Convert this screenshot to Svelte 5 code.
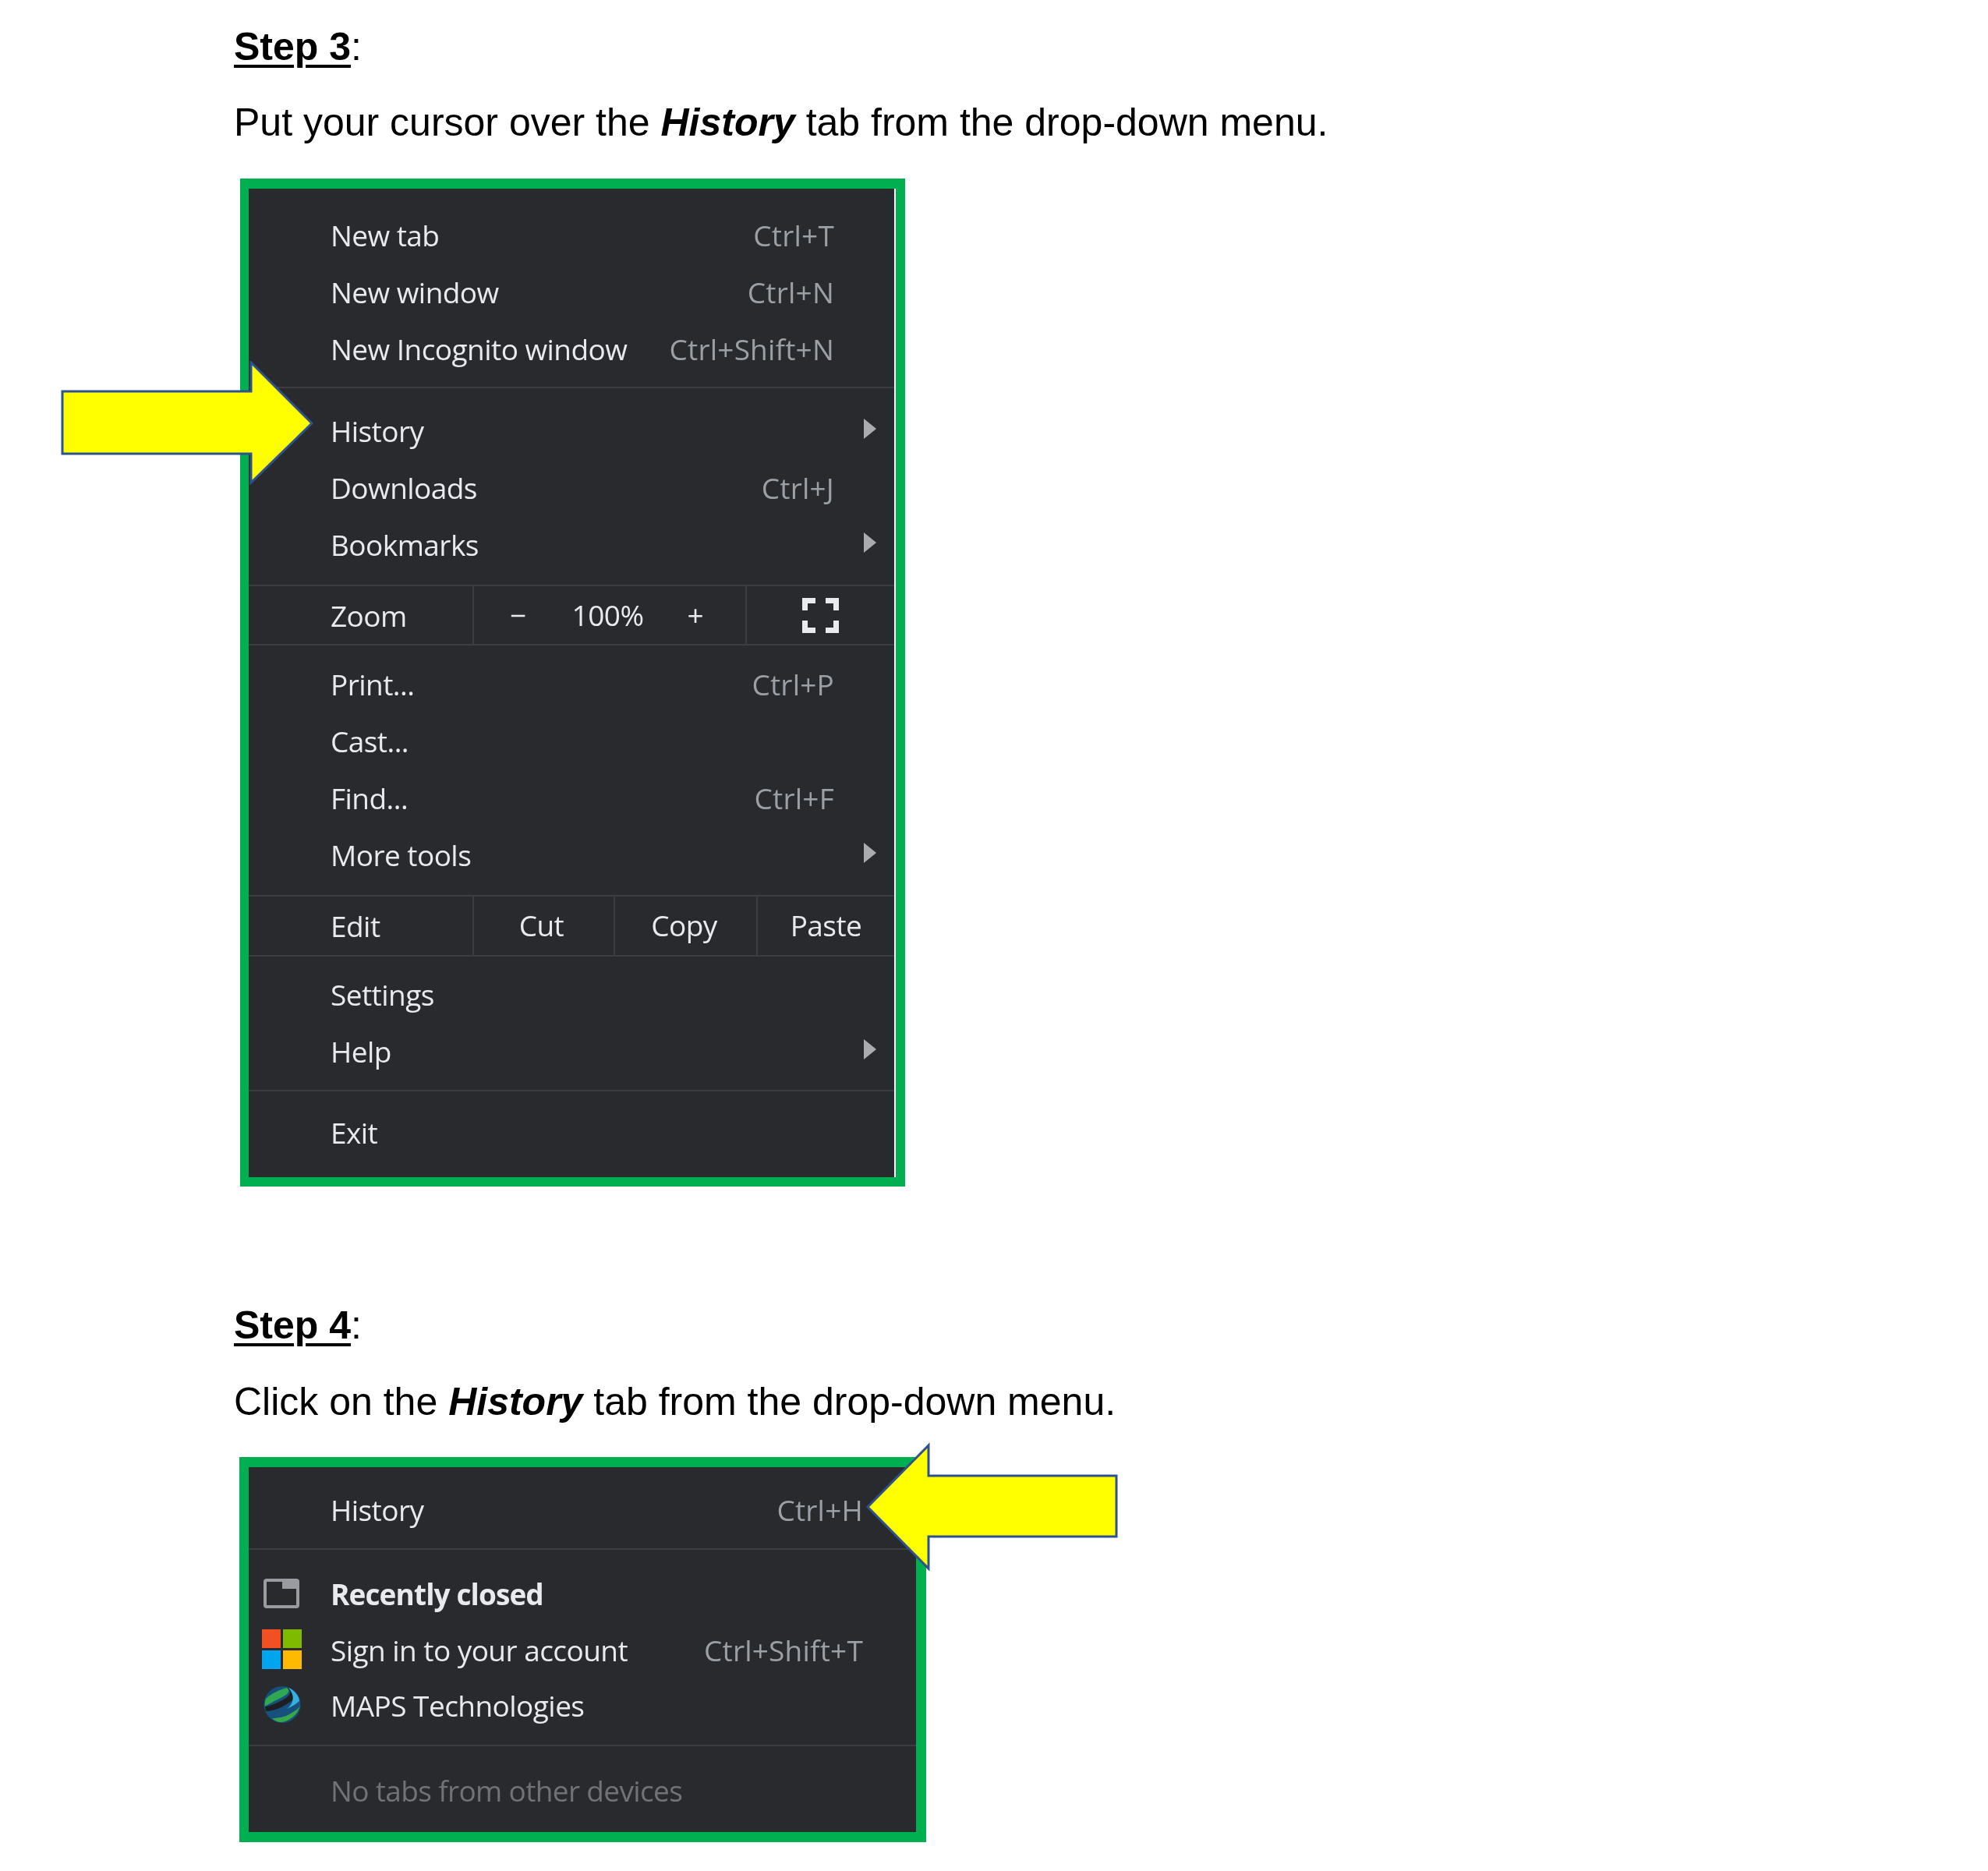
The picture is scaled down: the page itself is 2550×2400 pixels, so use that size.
<script>
  const sectionsA = [
    [{ t: 'New tab', s: 'Ctrl+T' }, { t: 'New window', s: 'Ctrl+N' }, { t: 'New Incognito window', s: 'Ctrl+Shift+N' }],
    [{ t: 'History', sub: true }, { t: 'Downloads', s: 'Ctrl+J' }, { t: 'Bookmarks', sub: true }],
  ];
  const sectionsB = [{ t: 'Print...', s: 'Ctrl+P' }, { t: 'Cast...' }, { t: 'Find...', s: 'Ctrl+F' }, { t: 'More tools', sub: true }];
  const sectionsC = [{ t: 'Settings' }, { t: 'Help', sub: true }];
</script>

{#snippet row(item)}
  <div class="row">
    <span class="label">{item.t}</span>
    {#if item.s}<span class="short">{item.s}</span>{/if}
    {#if item.sub}<svg class="caret" viewBox="0 0 16 26"><path d="M0 0L16 13L0 26Z" fill="#a9abae" /></svg>{/if}
  </div>
{/snippet}

<div class="page">
  <h2 class="step first"><u>Step 3</u><span class="colon">:</span></h2>
  <p class="lead">Put your cursor over the <b><i>History</i></b> tab from the drop-down menu.</p>

  <div class="frame one">
    <div class="menu">
      <section class="s1">{#each sectionsA[0] as item}{@render row(item)}{/each}</section>
      <section class="s2">{#each sectionsA[1] as item}{@render row(item)}{/each}</section>
      <div class="tool zoom">
        <span class="label tl">Zoom</span>
        <div class="zoomctl"><span>−</span><span class="pct">100%</span><span>+</span></div>
        <div class="fs">
          <svg viewBox="0 0 47 45" width="47" height="45">
            <path d="M3.5 16V3.5H17M30 3.5H43.5V16M3.5 29V41.5H17M30 41.5H43.5V29" fill="none" stroke="#e8eaed" stroke-width="7" />
          </svg>
        </div>
      </div>
      <section class="s3">{#each sectionsB as item}{@render row(item)}{/each}</section>
      <div class="tool edit">
        <span class="label tl">Edit</span>
        <span class="cell cut">Cut</span><span class="cell copy">Copy</span><span class="cell paste">Paste</span>
      </div>
      <section class="s4">{#each sectionsC as item}{@render row(item)}{/each}</section>
      <section class="s5">{@render row({ t: 'Exit' })}</section>
    </div>
    <svg class="arrow a1" viewBox="0 0 330 163" width="330" height="163">
      <path d="M2 39H244V2L322 80L244 156V119H2Z" fill="#ffff00" stroke="#2f528f" stroke-width="3" />
    </svg>
  </div>

  <h2 class="step second"><u>Step 4</u><span class="colon">:</span></h2>
  <p class="lead lead2">Click on the <b><i>History</i></b> tab from the drop-down menu.</p>

  <div class="frame two">
    <div class="menu">
      <section class="h1">
        <div class="row wide"><span class="label">History</span><span class="short">Ctrl+H</span></div>
      </section>
      <section class="h2">
        <div class="row wide">
          <svg class="ic tab" viewBox="0 0 46 38" width="46" height="38">
            <rect x="2" y="2" width="42" height="34" rx="2" fill="none" stroke="#9a9ba0" stroke-width="4" />
            <rect x="24" y="2" width="20" height="11" fill="#9a9ba0" />
          </svg>
          <span class="label bold">Recently closed</span>
        </div>
        <div class="row wide">
          <svg class="ic ms" viewBox="0 0 51 51" width="51" height="51">
            <rect width="24" height="24" fill="#f25022" />
            <rect x="27" width="24" height="24" fill="#7fba00" />
            <rect y="27" width="24" height="24" fill="#00a4ef" />
            <rect x="27" y="27" width="24" height="24" fill="#ffb900" />
          </svg>
          <span class="label">Sign in to your account</span><span class="short">Ctrl+Shift+T</span>
        </div>
        <div class="row wide">
          <svg class="ic globe" viewBox="0 0 48 49" width="48" height="49">
            <circle cx="24" cy="24.5" r="23.5" fill="#16507f" />
            <path d="M3 17C10 10 22 5 30 3C36 8 30 12 20 17C12 21 6 24 2 27C1 24 2 20 3 17Z" fill="#2fa84f" />
            <path d="M30 3C38 8 34 14 22 20C14 24 6 27 2 27L3 33C14 33 26 27 36 20C42 15 42 8 36 5Z" fill="#1c1e22" />
            <path d="M32 3C40 6 46 14 46 20C42 24 36 27 30 30C40 22 40 12 32 3Z" fill="#35aee0" />
            <path d="M47 26C44 36 38 42 28 46C22 48 16 47 11 42C20 42 30 40 38 34C42 32 45 29 47 26Z" fill="#36a84a" />
          </svg>
          <span class="label">MAPS Technologies</span>
        </div>
      </section>
      <section class="h3">
        <div class="row wide"><span class="label dim">No tabs from other devices</span></div>
      </section>
    </div>
    <svg class="arrow a2" viewBox="0 0 326 165" width="326" height="165">
      <path d="M81 4L3 83L81 162V121H322V43H81Z" fill="#ffff00" stroke="#2f528f" stroke-width="3" />
    </svg>
  </div>
</div>

<style>
  :global(body) { margin: 0; background: #fff; }
  .page {
    width: 2550px; height: 2400px; box-sizing: border-box;
    padding: 30px 0 0 300px; background: #fff; overflow: hidden;
    font-family: "Liberation Sans", Arial, sans-serif; color: #000;
  }
  .step, .lead { margin: 0; font-size: 50px; line-height: 60px; font-weight: 400; }
  .step u { font-weight: 700; text-decoration-thickness: 4px; text-underline-offset: 6px; }
  .lead { margin-top: 37px; }
  .lead2 { margin-top: 38px; }
  .second { margin-top: 148px; }

  .frame {
    position: relative; margin-left: 8px; box-sizing: border-box;
    background: #00b050; margin-top: 42px;
  }
  .one { width: 853px; height: 1293px; padding: 13px 12px 12px 11px; }
  .two { width: 881px; height: 494px; padding: 13px 13px 13px 12px; margin-left: 7px; margin-top: 41px; }
  .menu {
    background: #292a2d; color: #e8eaed; height: 100%;
    font-family: "Open Sans", "Noto Sans", sans-serif; font-size: 37px;
    letter-spacing: -0.55px;
    filter: blur(0.5px);
  }
  .one .menu { border-right: 2px solid #fff; }
  section + section, .tool, .tool + section { border-top: 2px solid #3c3d40; }
  .s1 { padding: 23px 0 12px; }
  .s2 { padding: 18px 0 15px; }
  .s3 { padding: 13px 0 15px; }
  .s4 { padding: 12px 0 13px; }
  .s5 { padding: 16px 0 0; }
  .tool.edit { height: 77px; }
  .row {
    height: 73px; display: flex; align-items: center; position: relative;
    padding: 0 77px 0 105px; justify-content: space-between; white-space: nowrap;
    box-sizing: border-box;
  }
  .short { color: #9aa0a6; letter-spacing: 0.2px; }
  .caret { position: absolute; left: 789px; top: 21px; width: 16px; height: 26px; }
  .tool { display: flex; align-items: stretch; height: 76px; box-sizing: border-box; }
  .tool span { display: flex; align-items: center; justify-content: center; }
  .tl { width: 287px; justify-content: flex-start !important; padding-left: 105px; box-sizing: border-box; }
  .zoomctl { width: 350px; display: flex; justify-content: flex-start; padding: 0 0 2px 46px; box-sizing: border-box; border-left: 2px solid #3c3d40; }
  .pct { margin-left: 59px; }
  .pct + span { margin-left: 56px; }
  .fs { flex: 1; display: flex; align-items: center; justify-content: center; border-left: 2px solid #3c3d40; }
  .cell { border-left: 2px solid #3c3d40; box-sizing: border-box; padding-bottom: 2px; }
  .cut { width: 181px; padding-right: 6px; }
  .copy { width: 183px; padding-right: 4px; }
  .paste { flex: 1; }

  .h1 { padding: 18px 0 13px; }
  .h2 { padding: 21px 0 14px; }
  .h2 .row { height: 71.5px; }
  .h3 { padding: 20px 0 0; }
  .wide { padding: 0 68px 0 105px; }
  .bold { font-weight: 700; letter-spacing: -0.9px; }
  .dim { color: #6f7276; letter-spacing: -0.65px; }
  .ic { position: absolute; }
  .tab { left: 19px; top: 16px; }
  .ms { left: 17px; top: 9px; }
  .globe { left: 19px; top: 10px; }

  .arrow { position: absolute; }
  .a1 { left: -230px; top: 234px; }
  .a2 { left: 803px; top: -19px; }
</style>
